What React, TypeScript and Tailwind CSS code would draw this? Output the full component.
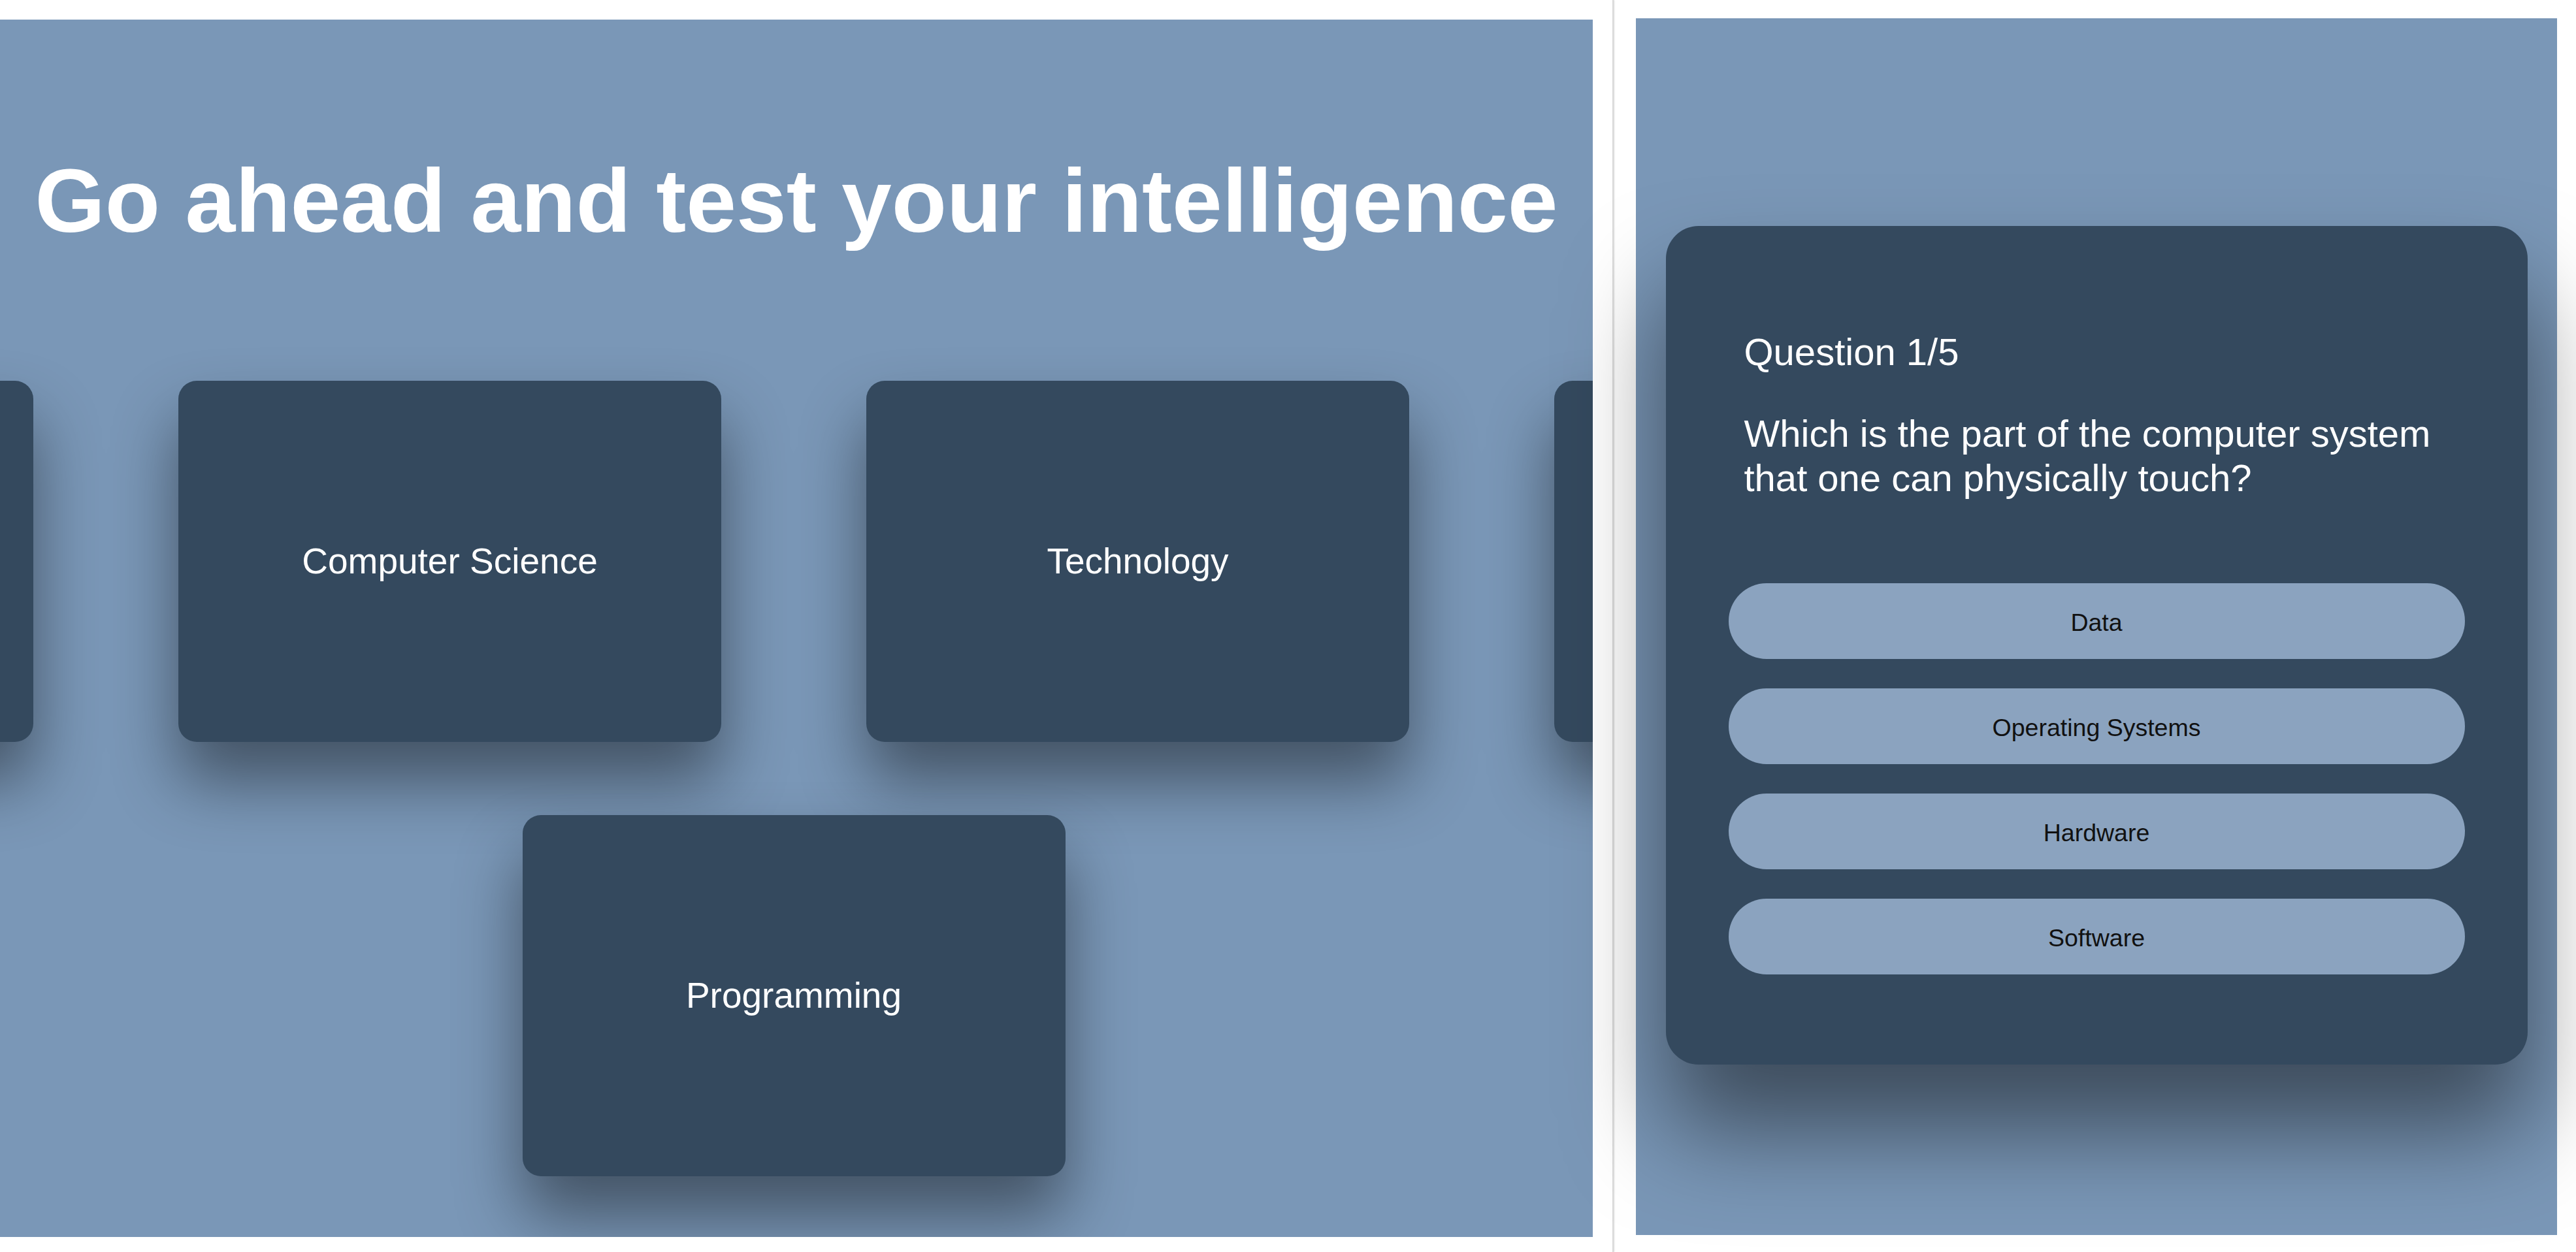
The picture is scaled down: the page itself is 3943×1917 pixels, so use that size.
const topics = [
  "General Knowledge",
  "Computer Science",
  "Technology",
  "Mathematics",
  "Programming",
];

const options = ["Data", "Operating Systems", "Hardware", "Software"];

function TopicCard({ title }: { title: string }) {
  return (
    <div className="w-[831px] h-[553px] shrink-0 rounded-[28px] bg-[#34495e] flex items-center justify-center text-white text-[55px] shadow-[0_60px_100px_rgba(0,0,0,0.45)]">
      {title}
    </div>
  );
}

function TopicsPanel() {
  return (
    <div className="mt-[30px] w-[2438px] h-[1864px] shrink-0 overflow-hidden bg-[#7a97b7] pt-[197px]">
      <h1 className="text-center text-white font-bold text-[138px] leading-[160px]">
        Go ahead and test your intelligence
      </h1>

      {/* wider than the panel, so the outer cards get cut off */}
      <div className="mt-[196px] flex justify-center">
        <div className="w-[4000px] mr-[8px] shrink-0 flex flex-wrap justify-center gap-x-[222px] gap-y-[112px]">
          {topics.map((t) => (
            <TopicCard key={t} title={t} />
          ))}
        </div>
      </div>
    </div>
  );
}

function QuizPanel() {
  return (
    <div className="mt-[28px] w-[1410px] h-[1863px] shrink-0 bg-[#7a97b7] pt-[318px] flex justify-center">
      <div className="w-[1319px] h-fit rounded-[50px] bg-[#34495e] pt-[159px] pb-[138px] px-[96px] shadow-[0_100px_150px_rgba(0,0,0,0.5)]">
        <div className="px-[24px] text-white">
          <p className="text-[58px] leading-[68px]">Question 1/5</p>
          <p className="mt-[57px] text-[58px] leading-[68px]">
            Which is the part of the computer system that one can physically touch?
          </p>
        </div>

        <div className="mt-[127px] flex flex-col gap-[45px]">
          {options.map((o) => (
            <button
              key={o}
              className="h-[116px] w-full pt-[5px] rounded-full bg-[#8ba3bf] text-[37.5px] text-[#111]"
            >
              {o}
            </button>
          ))}
        </div>
      </div>
    </div>
  );
}

export default function App() {
  return (
    <div className="w-[3943px] h-[1917px] bg-white flex overflow-hidden font-['Liberation_Sans',Arial,sans-serif]">
      <TopicsPanel />
      <div className="w-[66px] shrink-0 flex justify-center">
        <div className="ml-[-4px] w-[2px] h-full bg-[#d9d9d9] shadow-[1px_0_2px_rgba(0,0,0,0.15)]" />
      </div>
      <QuizPanel />
    </div>
  );
}
